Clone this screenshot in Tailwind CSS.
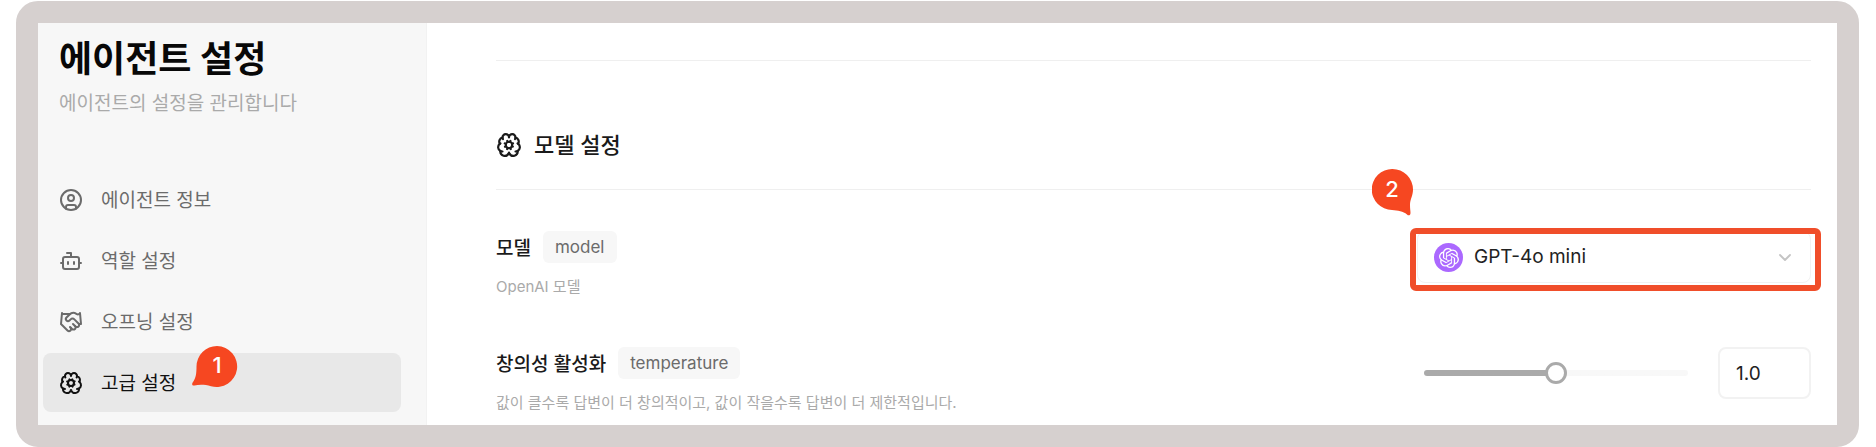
<!DOCTYPE html>
<html lang="ko">
<head>
    <meta charset="UTF-8">
    <meta name="viewport" content="width=device-width, initial-scale=1">
    <title>에이전트 설정</title>
    <script src="https://cdn.jsdelivr.net/npm/@tailwindcss/browser@4"></script>
</head>
<body class="bg-white pt-px pl-4 pr-[17px] font-['Inter','Noto_Sans_CJK_KR',sans-serif] text-[#1a1a1a]">

    <!-- icons used more than once -->
    <svg class="hidden">
        <symbol id="brain-cog" viewBox="0 0 24 24">
            <circle cx="12" cy="12" r="3"/>
            <path d="M12 5a3 3 0 1 0-5.997.142 4 4 0 0 0-2.526 5.77 4 4 0 0 0 .556 6.588 4 4 0 0 0 7.636 2.106 3.2 3.2 0 0 0 .164-.546c.028-.13.306-.13.335 0a3.2 3.2 0 0 0 .163.546 4 4 0 0 0 7.636-2.106 4 4 0 0 0 .556-6.588 4 4 0 0 0-2.526-5.77A3 3 0 1 0 12 5"/>
            <path d="M17.599 6.5a3 3 0 0 0 .399-1.375M6.003 5.125A3 3 0 0 0 6.401 6.5M3.477 10.896a4 4 0 0 1 .585-.396M19.938 10.5a4 4 0 0 1 .585.396M6 18a4 4 0 0 1-1.967-.516M19.967 17.484A4 4 0 0 1 18 18"/>
            <path d="m15.7 10.4-.9.4m-5.6 2.4-.9.4m5.3 2.1-.4-.9m-2.4-5.6-.4-.9m5.1 5.2-.9-.4m-5.6-2.2-.9-.4m2.2 5.2.4-.9m2.2-5.6.4-.9"/>
        </symbol>
    </svg>

    <div class="flex border-[22px] border-[#d6d0cf] rounded-[22px]">

        <aside class="w-[389px] shrink-0 bg-[#f7f7f7] border-r border-[#f2f2f2] px-[5px] pt-3">
            <div class="px-4">
                <h1 class="text-4xl leading-12 font-bold text-[#080808]">에이전트 설정</h1>
                <p class="text-[19px] leading-8 mt-[5px] text-[#aaaaaa]">에이전트의 설정을 관리합니다</p>
            </div>

            <nav class="flex flex-col gap-0.5 mt-[50px] mr-5 font-['Noto_Sans_CJK_KR',sans-serif] text-[19px] text-[#6b6b6b]">
                <a href="#" class="flex items-center gap-[18px] h-[59px] px-4 rounded-lg">
                    <svg class="size-6" viewBox="0 0 24 24" fill="none" stroke="currentColor" stroke-width="2" stroke-linecap="round" stroke-linejoin="round">
                        <circle cx="12" cy="12" r="10"/>
                        <circle cx="12" cy="10" r="3"/>
                        <path d="M7 20.662V19a2 2 0 0 1 2-2h6a2 2 0 0 1 2 2v1.662"/>
                    </svg>
                    에이전트 정보
                </a>
                <a href="#" class="flex items-center gap-[18px] h-[59px] px-4 rounded-lg">
                    <svg class="size-6" viewBox="0 0 24 24" fill="none" stroke="currentColor" stroke-width="2" stroke-linecap="round" stroke-linejoin="round">
                        <path d="M12 8V4H8"/>
                        <rect width="16" height="12" x="4" y="8" rx="2"/>
                        <path d="M2 14h2M20 14h2M15 13v2M9 13v2"/>
                    </svg>
                    역할 설정
                </a>
                <a href="#" class="flex items-center gap-[18px] h-[59px] px-4 rounded-lg">
                    <svg class="size-6" viewBox="0 0 24 24" fill="none" stroke="currentColor" stroke-width="2" stroke-linecap="round" stroke-linejoin="round">
                        <path d="m11 17 2 2a1 1 0 1 0 3-3"/>
                        <path d="m14 14 2.5 2.5a1 1 0 1 0 3-3l-3.88-3.88a3 3 0 0 0-4.24 0l-.88.88a1 1 0 1 1-3-3l2.81-2.81a5.79 5.79 0 0 1 7.06-.87l.47.28a2 2 0 0 0 1.42.25L21 4"/>
                        <path d="m21 3 1 11h-2"/>
                        <path d="M3 3 2 14l6.5 6.5a1 1 0 1 0 3-3"/>
                        <path d="M3 4h8"/>
                    </svg>
                    오프닝 설정
                </a>
                <a href="#" class="relative flex items-center gap-[18px] h-[59px] px-4 rounded-lg bg-[#e8e8e8] text-[#111111]">
                    <svg class="size-6" fill="none" stroke="currentColor" stroke-width="2" stroke-linecap="round" stroke-linejoin="round"><use href="#brain-cog"/></svg>
                    고급 설정
                    <!-- step 1 -->
                    <span class="absolute left-[148px] -top-2 w-12 h-12 font-['Inter',sans-serif]">
                        <svg class="absolute inset-0 size-12" viewBox="0 0 48 48" fill="#f64721">
                            <path d="M26 1A20.500 20.500 0 1 1 20 41.200C14 39.500 8 39.500 3.500 40.500C1 41 .5 38.500 2 37C5 33 5.500 28 5.500 21.500A20.500 20.500 0 0 1 26 1Z"/>
                        </svg>
                        <span class="absolute left-4 top-1 w-5 text-center text-[22px] leading-8 font-medium text-white">1</span>
                    </span>
                </a>
            </nav>
        </aside>

        <main class="grow pl-[69px] pr-[26px] pt-[37px] pb-[10px]">
            <div class="border-t border-[#efefef] pt-[68px] pb-7">
                <h2 class="flex items-center gap-3 text-[22px] leading-8 font-medium">
                    <svg class="size-[26px]" fill="none" stroke="currentColor" stroke-width="2" stroke-linecap="round" stroke-linejoin="round"><use href="#brain-cog"/></svg>
                    모델 설정
                </h2>
            </div>

            <div class="flex flex-col gap-12 border-t border-[#efefef] pt-[41px]">
                <div class="flex justify-between items-start">
                    <div>
                        <div class="flex items-center gap-3 h-8">
                            <label for="model" class="font-['Noto_Sans_CJK_KR',sans-serif] text-[19px] font-medium">모델</label>
                            <code class="px-3 rounded-md bg-[#f7f7f7] font-['Inter',sans-serif] text-[17px] leading-8 text-[#6b6b6b]">model</code>
                        </div>
                        <p class="mt-3 text-[15px] leading-6 text-[#aaaaaa]">OpenAI 모델</p>
                    </div>

                    <div class="relative w-[394px] h-[52px]">
                        <select id="model" class="appearance-none w-full h-full pl-14 pr-12 bg-white border border-[#f2f2f2] rounded-lg text-[19px] text-[#222222]">
                            <option>GPT-4o mini</option>
                        </select>
                        <span class="absolute left-[17px] top-3 flex items-center justify-center size-[29px] rounded-full bg-[#ab68ff] pointer-events-none">
                            <svg class="size-5" viewBox="0 0 24 24" fill="#ffffff">
                                <path d="M22.2819 9.8211a5.9847 5.9847 0 0 0-.5157-4.9108 6.0462 6.0462 0 0 0-6.5098-2.9A6.0651 6.0651 0 0 0 4.9807 4.1818a5.9847 5.9847 0 0 0-3.9977 2.9 6.0462 6.0462 0 0 0 .7427 7.0966 5.98 5.98 0 0 0 .511 4.9107 6.051 6.051 0 0 0 6.5146 2.9001A5.9847 5.9847 0 0 0 13.2599 24a6.0557 6.0557 0 0 0 5.7718-4.2058 5.9894 5.9894 0 0 0 3.9977-2.9001 6.0557 6.0557 0 0 0-.7475-7.0729zm-9.022 12.6081a4.4755 4.4755 0 0 1-2.8764-1.0408l.1419-.0804 4.7783-2.7582a.7948.7948 0 0 0 .3927-.6813v-6.7369l2.02 1.1686a.071.071 0 0 1 .038.052v5.5826a4.504 4.504 0 0 1-4.4945 4.4944zm-9.6607-4.1254a4.4708 4.4708 0 0 1-.5346-3.0137l.142.0852 4.783 2.7582a.7712.7712 0 0 0 .7806 0l5.8428-3.3685v2.3324a.0804.0804 0 0 1-.0332.0615L9.74 19.9502a4.4992 4.4992 0 0 1-6.1408-1.6464zM2.3408 7.8956a4.485 4.485 0 0 1 2.3655-1.9728V11.6a.7664.7664 0 0 0 .3879.6765l5.8144 3.3543-2.0201 1.1685a.0757.0757 0 0 1-.071 0l-4.8303-2.7865A4.504 4.504 0 0 1 2.3408 7.872zm16.5963 3.8558L13.1038 8.364 15.1192 7.2a.0757.0757 0 0 1 .071 0l4.8303 2.7913a4.4944 4.4944 0 0 1-.6765 8.1042v-5.6772a.79.79 0 0 0-.407-.667zm2.0107-3.0231l-.142-.0852-4.7735-2.7818a.7759.7759 0 0 0-.7854 0L9.409 9.2297V6.8974a.0662.0662 0 0 1 .0284-.0615l4.8303-2.7866a4.4992 4.4992 0 0 1 6.6802 4.66zM8.3065 12.863l-2.02-1.1638a.0804.0804 0 0 1-.038-.0567V6.0742a4.4992 4.4992 0 0 1 7.3757-3.4537l-.142.0805L8.704 5.459a.7948.7948 0 0 0-.3927.6813zm1.0976-2.3654l2.602-1.4998 2.6069 1.4998v2.9994l-2.5974 1.4997-2.6067-1.4997Z"/>
                            </svg>
                        </span>
                        <svg class="absolute right-[19px] top-5 w-[14px] h-3 pointer-events-none" viewBox="0 0 14 12" fill="none" stroke="#c4c4c4" stroke-width="1.8" stroke-linecap="round" stroke-linejoin="round">
                            <path d="m2 4 5 5 5-5"/>
                        </svg>
                        <!-- highlight and step 2 -->
                        <span class="absolute -left-[7px] -right-[10px] -top-[3px] -bottom-2 border-6 border-[#f04e2a] rounded-md pointer-events-none"></span>
                        <span class="absolute -left-[45px] -top-[62px] w-12 h-12">
                            <svg class="absolute inset-0 size-12" viewBox="0 0 48 48" fill="#f64721">
                                <path d="M20.500 0A20.500 20.500 0 0 1 41 20.500C41 27 38 30 38 36C38 40 38.500 42 38.500 44C38.500 46.500 36.500 47 35 45.500C31 42 26 41.500 20 41A20.500 20.500 0 0 1 20.500 0Z"/>
                            </svg>
                            <span class="absolute left-2.5 top-1 w-5 text-center text-[22px] leading-8 font-medium text-white">2</span>
                        </span>
                    </div>
                </div>

                <div class="flex justify-between items-start">
                    <div>
                        <div class="flex items-center gap-3 h-8">
                            <label for="temperature" class="font-['Noto_Sans_CJK_KR',sans-serif] text-[19px] font-medium">창의성 활성화</label>
                            <code class="px-3 rounded-md bg-[#f7f7f7] font-['Inter',sans-serif] text-[17px] leading-8 text-[#6b6b6b]">temperature</code>
                        </div>
                        <p class="mt-3 text-[15px] leading-6 text-[#aaaaaa]">값이 클수록 답변이 더 창의적이고, 값이 작을수록 답변이 더 제한적입니다.</p>
                    </div>

                    <div class="flex items-center gap-[30px]">
                        <input id="temperature" type="range" min="0" max="2" step="0.1" value="1" class="appearance-none w-[264px] h-1.5 rounded-full bg-linear-to-r from-[#aaaaaa] from-50% to-[#f8f8f8] to-50% [&::-webkit-slider-thumb]:appearance-none [&::-webkit-slider-thumb]:size-[22px] [&::-webkit-slider-thumb]:rounded-full [&::-webkit-slider-thumb]:bg-white [&::-webkit-slider-thumb]:border-3 [&::-webkit-slider-thumb]:border-solid [&::-webkit-slider-thumb]:border-[#aaaaaa]">
                        <input id="temperature-value" type="text" value="1.0" aria-label="temperature" class="w-[93px] h-[52px] px-4 border-2 border-[#f2f2f2] rounded-lg text-[19px] text-[#222222]">
                    </div>
                </div>
            </div>
        </main>
    </div>

    <script>
        const slider = document.getElementById('temperature');
        const valueBox = document.getElementById('temperature-value');

        slider.addEventListener('input', () => {
            valueBox.value = Number(slider.value).toFixed(1);
        });
    </script>
</body>
</html>
